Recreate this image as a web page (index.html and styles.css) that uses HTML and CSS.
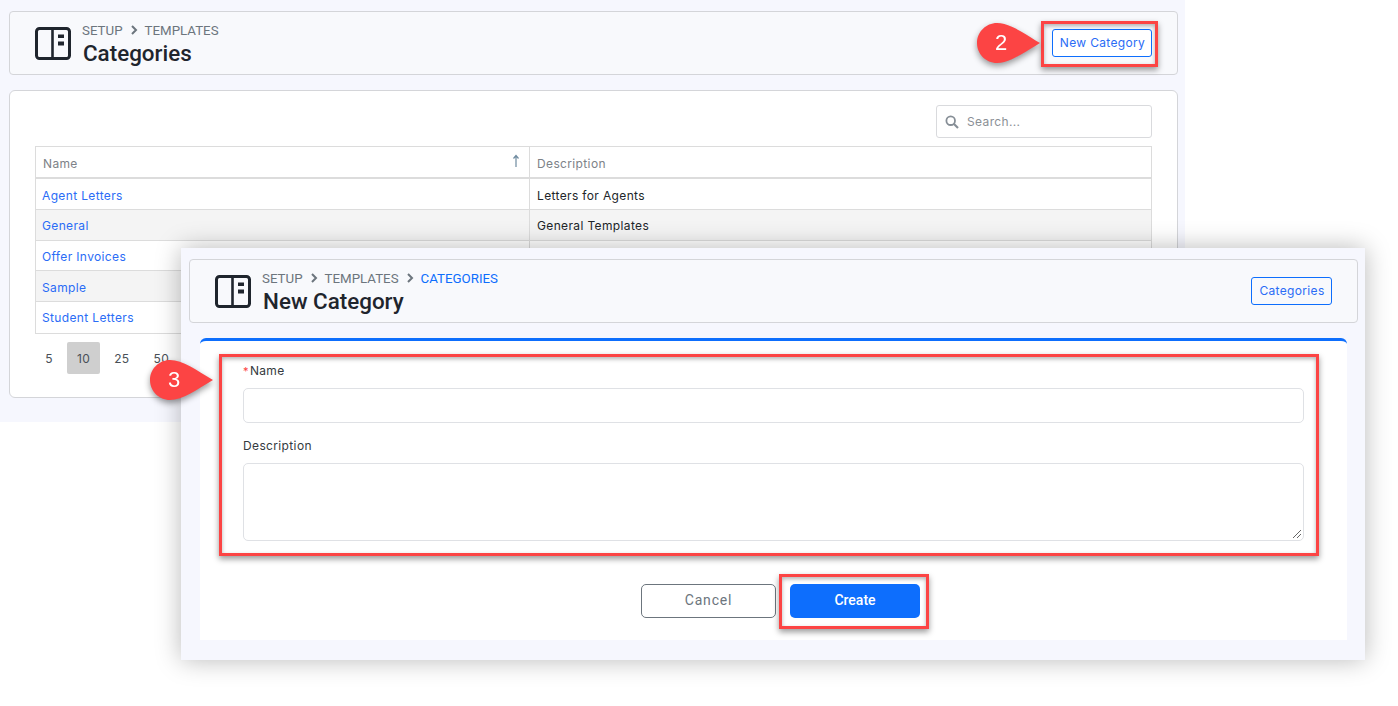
FILE: index.html
```html
<!DOCTYPE html>
<html lang="en">
<head>
<meta charset="utf-8">
<title>New Category</title>
<link rel="stylesheet" href="styles.css">
</head>
<body>
<section class="window window-back">
  <header class="head">
    <svg class="logo" viewBox="0 0 36 33"><rect x="1.5" y="1.5" width="33" height="30" rx="3" fill="none" stroke="#1f252d" stroke-width="3"/><path d="M17.5 2v29" stroke="#1f252d" stroke-width="2.6"/><path d="M23 7.5h6v3.5h-6zM23 14.5h6v4h-6z" fill="#1f252d"/></svg>
    <div class="head-text">
      <div class="crumbs"><span>SETUP</span><svg class="chev" viewBox="0 0 8 10"><path d="M2 1l4 4-4 4" fill="none" stroke="#6c757d" stroke-width="2"/></svg><span>TEMPLATES</span></div>
      <h1>Categories</h1>
    </div>
    <button class="btn-outline btn-new">New Category</button>
  </header>
  <main class="card list-card">
    <div class="search-row">
      <div class="search">
        <svg class="search-icon" viewBox="0 0 14 14"><circle cx="5.7" cy="5.7" r="4.3" fill="none" stroke="#868e96" stroke-width="1.8"/><path d="M9 9l4 4" stroke="#868e96" stroke-width="2.2"/></svg>
        <span>Search...</span>
      </div>
    </div>
    <table class="grid">
      <thead><tr><th class="col-name">Name<svg class="sort" viewBox="0 0 8 14"><path d="M4 13V2M1.5 4.5L4 1.5l2.5 3" fill="none" stroke="#6f8ba0" stroke-width="1.2"/></svg></th><th>Description</th></tr></thead>
      <tbody>
        <tr class="r1"><td><a>Agent Letters</a></td><td>Letters for Agents</td></tr>
        <tr class="r2 alt"><td><a>General</a></td><td>General Templates</td></tr>
        <tr class="r3"><td><a>Offer Invoices</a></td><td></td></tr>
        <tr class="alt"><td><a>Sample</a></td><td></td></tr>
        <tr class="r5"><td><a>Student Letters</a></td><td></td></tr>
      </tbody>
    </table>
    <div class="pager"><span class="page-first">5</span><span class="current">10</span><span>25</span><span>50</span></div>
  </main>
</section>

<section class="window window-front">
  <header class="head">
    <svg class="logo" viewBox="0 0 36 33"><rect x="1.5" y="1.5" width="33" height="30" rx="3" fill="none" stroke="#1f252d" stroke-width="3"/><path d="M17.5 2v29" stroke="#1f252d" stroke-width="2.6"/><path d="M23 7.5h6v3.5h-6zM23 14.5h6v4h-6z" fill="#1f252d"/></svg>
    <div class="head-text">
      <div class="crumbs"><span>SETUP</span><svg class="chev" viewBox="0 0 8 10"><path d="M2 1l4 4-4 4" fill="none" stroke="#6c757d" stroke-width="2"/></svg><span>TEMPLATES</span><svg class="chev" viewBox="0 0 8 10"><path d="M2 1l4 4-4 4" fill="none" stroke="#6c757d" stroke-width="2"/></svg><a>CATEGORIES</a></div>
      <h1>New Category</h1>
    </div>
    <button class="btn-outline btn-cat">Categories</button>
  </header>
  <main class="card form-card">
    <label class="field-label label-name"><span class="req">*</span>Name</label>
    <div class="input"></div>
    <label class="field-label label-desc">Description</label>
    <div class="textarea"><svg class="grip" viewBox="0 0 10 10"><path d="M1 9l8-8M5 9l4-4" stroke="#666" stroke-width="1"/></svg></div>
    <div class="actions">
      <button class="btn-cancel">Cancel</button>
      <button class="btn-create">Create</button>
    </div>
  </main>
</section>

<div class="mark mark-new"></div>
<div class="mark mark-form"></div>
<div class="mark mark-create"></div>
<div class="callout callout-2"><svg viewBox="0 0 63 40"><path d="M20 0C33 0 46 10 63 20 46 30 33 40 20 40 9 40 0 31 0 20S9 0 20 0z" fill="#fc4444"/></svg><span>2</span></div>
<div class="callout callout-3"><svg viewBox="0 0 63 40"><path d="M20 0C33 0 46 10 63 20 46 30 33 40 20 40 9 40 0 31 0 20S9 0 20 0z" fill="#fc4444"/></svg><span>3</span></div>
</body>
</html>
```
FILE: styles.css
```css
* { box-sizing: border-box; }
html, body { margin: 0; height: 100%; background: #fff; overflow: hidden; }
body { font-family: Inter, "Liberation Sans", sans-serif; font-size: 12px; letter-spacing: .36px; color: #212529; }

.window { position: absolute; background: #f6f7fe; }
.window-back { left: 0; top: 0; width: 1185px; height: 422px; padding: 11px 7px 0 9px; }
.window-front { left: 181px; top: 248px; width: 1184px; height: 412px; padding: 11px 7px 0 8px; box-shadow: 0 0 24px rgba(0,0,0,.28); }

.head { height: 64px; display: flex; align-items: center; padding: 0 25px; background: #f8f9fc; border: 1px solid #d4d5d9; border-radius: 4px; }
.logo { width: 36px; height: 33px; flex: none; margin-right: 11px; }
.head-text { flex: 1; padding-top: 1px; }
.crumbs { display: flex; align-items: center; gap: 7px; height: 17px; font-family: Roboto, sans-serif; font-size: 13.3px; letter-spacing: 0; color: #6c757d; }
.crumbs a { color: #0d6efd; }
.chev { width: 8px; height: 10px; }
h1 { margin: 1px 0 0 1px; font-family: Roboto, sans-serif; font-weight: 500; font-size: 22.4px; line-height: 26px; letter-spacing: 0; color: #1f252d; }

.btn-outline { height: 28px; padding: 0 0 2px 1px; white-space: nowrap; background: #fff; border: 1px solid #0d6efd; border-radius: 3px; font: 12px Inter, sans-serif; letter-spacing: .34px; color: #2a6cf6; }
.btn-new { width: 100px; }
.btn-cat { width: 81px; background: transparent; }

.card { background: #fff; }
.list-card { margin-top: 15px; height: 308px; padding: 14px 25px 0; border: 1px solid #d4d5d9; border-radius: 6px; }
.search-row { display: flex; justify-content: flex-end; }
.search { width: 216px; height: 33px; display: flex; align-items: center; gap: 8px; padding-left: 8px; border: 1px solid #d9dadd; border-radius: 3px; color: #8b9096; }
.search-icon { width: 14px; height: 14px; }
.grid { width: 100%; margin-top: 8px; border-collapse: collapse; table-layout: fixed; }
.grid th, .grid td { height: 31px; padding: 3px 6px 0; border: 1px solid #dcdcdc; text-align: left; font-weight: 400; }
.grid th { color: #7d8288; border-bottom-width: 2px; padding-left: 7px; }
.grid th:first-child { width: 494px; }
.grid td:last-child { padding-left: 7px; }
.grid .r1 td { height: 32px; padding-top: 4px; }
.grid .r2 td { padding-top: 1px; }
.grid .r3 td { height: 30px; padding-top: 2px; }
.grid .r5 td { height: 32px; padding-top: 0; padding-bottom: 1px; }
.col-name { position: relative; }
.sort { position: absolute; right: 9px; top: 7px; width: 8px; height: 14px; }
.grid a { color: #2a6cf6; }
.alt td { background: #f4f4f4; }
.pager { display: flex; gap: 4px; margin-top: 8px; }
.pager span { height: 32px; padding: 0 10px; display: flex; align-items: center; justify-content: center; color: #495057; border-radius: 2px; }
.pager .page-first { width: 28px; }
.pager .current { background: #cfcfcf; }

.form-card { margin: 15px 11px 0 11px; height: 302px; padding: 21px 43px 0; border-top: 3px solid #0d6efd; border-radius: 6px 6px 0 0; }
.field-label { display: block; height: 18px; line-height: 18px; color: #343a40; }
.req { color: #fc4444; margin-right: 1px; font-size: 11px; }
.input { height: 35px; margin-top: 8px; border: 1px solid #dfe1e5; border-radius: 5px; }
.label-desc { margin-top: 14px; }
.textarea { height: 78px; margin-top: 8px; border: 1px solid #dfe1e5; border-radius: 5px; display: flex; justify-content: flex-end; align-items: flex-end; }
.grip { width: 10px; height: 10px; margin: 0 1px 1px 0; }
.actions { display: flex; justify-content: center; gap: 14px; margin-top: 43px; padding-left: 14px; }
.actions button { height: 34px; padding: 0 0 2px; border-radius: 5px; font-family: Roboto, sans-serif; font-size: 14px; }
.btn-cancel { width: 135px; background: #fff; border: 1px solid #6c757d; color: #6c757d; letter-spacing: .8px; }
.btn-create { width: 130px; background: #0d6efd; border: 0; color: #fff; font-weight: 500; }

.mark { position: absolute; border: 3px solid #fc4444; box-shadow: 0 3px 6px rgba(0,0,0,.4), inset 0 2px 4px rgba(0,0,0,.3); }
.mark-new { left: 1041px; top: 21px; width: 117px; height: 46px; }
.mark-form { left: 219px; top: 354px; width: 1100px; height: 202px; }
.mark-create { left: 779px; top: 574px; width: 150px; height: 55px; }

.callout { position: absolute; width: 63px; height: 40px; filter: drop-shadow(0 3px 3px rgba(0,0,0,.4)); }
.callout svg { display: block; width: 63px; height: 40px; }
.callout span { position: absolute; left: 18px; top: 6px; width: 12px; text-align: center; font: 22px/28px "Liberation Sans", sans-serif; letter-spacing: 0; color: #fff; }
.callout-2 { left: 977px; top: 23px; }
.callout-3 { left: 150px; top: 360px; }
```
